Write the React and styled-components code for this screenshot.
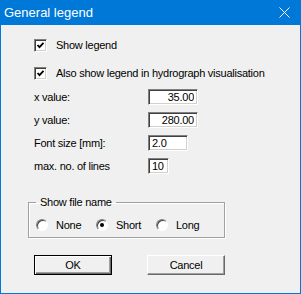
import React from 'react';
import styled, {createGlobalStyle} from 'styled-components';

const GlobalStyle = createGlobalStyle`
  html, body {
    margin: 0;
    padding: 0;
    background: #f0f0f0;
  }
  body {
    font-family: "Liberation Sans", Arial, sans-serif;
    font-size: 11px;
    letter-spacing: -0.25px;
    color: #000;
  }
`;

const CheckMark = () => (
    <svg width="9" height="9" viewBox="0 0 9 9">
        <polyline points="1.5,4 3.5,6.2 7.5,1.8" fill="none" stroke="#000" strokeWidth="1.8"/>
    </svg>
);

const CloseIcon = () => (
    <svg width="11" height="11" viewBox="0 0 11 11">
        <path d="M0.5 0.5 L10.5 10.5 M10.5 0.5 L0.5 10.5" stroke="#fff" strokeWidth="1"/>
    </svg>
);

const App = () => {
    const fields = [
        {label: 'x value:', value: '35.00', width: 50, align: 'right'},
        {label: 'y value:', value: '280.00', width: 50, align: 'right'},
        {label: 'Font size [mm]:', value: '2.0', width: 40, align: 'left'},
        {label: 'max. no. of lines', value: '10', width: 21, align: 'left'},
    ];

    const options = ['None', 'Short', 'Long'];

    return (
        <>
            <GlobalStyle/>
            <Window>
                <TitleBar>
                    <Title>General legend</Title>
                    <CloseButton><CloseIcon/></CloseButton>
                </TitleBar>
                <Body>
                    <Checks>
                        <CheckRow>
                            <CheckBox><CheckMark/></CheckBox>
                            Show legend
                        </CheckRow>
                        <CheckRow>
                            <CheckBox><CheckMark/></CheckBox>
                            Also show legend in hydrograph visualisation
                        </CheckRow>
                    </Checks>

                    <Fields>
                        {fields.map((field) => (
                            <React.Fragment key={field.label}>
                                <FieldLabel>{field.label}</FieldLabel>
                                <Field
                                    readOnly
                                    value={field.value}
                                    $width={field.width}
                                    $align={field.align}
                                />
                            </React.Fragment>
                        ))}
                    </Fields>

                    <Group>
                        <GroupTitle>Show file name</GroupTitle>
                        <Radios>
                            {options.map((option) => (
                                <RadioOption key={option}>
                                    <Radio $checked={option === 'Short'}/>
                                    {option}
                                </RadioOption>
                            ))}
                        </Radios>
                    </Group>

                    <Buttons>
                        <Button $default>OK</Button>
                        <Button>Cancel</Button>
                    </Buttons>
                </Body>
            </Window>
        </>
    );
};

export default App;


const Window = styled.div`
  width: 301px;
  height: 294px;
  box-sizing: border-box;
  border: 1px solid #0078d7;
  border-top: none;
  background: #f0f0f0;
  display: flex;
  flex-direction: column;
`;

const TitleBar = styled.div`
  height: 25px;
  background: #0078d7;
  color: #fff;
  display: flex;
  align-items: center;
  justify-content: space-between;
  padding: 0 10px 0 4px;
  margin: 0 -1px;
  box-sizing: border-box;
`;

const Title = styled.span`
  font-size: 13px;
  letter-spacing: 0;
  margin-top: -1px;
`;

const CloseButton = styled.span`
  display: flex;
  margin-right: 1px;
`;

const Body = styled.div`
  padding: 14px 0 0 33px;
  display: flex;
  flex-direction: column;
`;

const Checks = styled.div`
  display: flex;
  flex-direction: column;
  gap: 15px;
`;

const CheckRow = styled.label`
  display: flex;
  align-items: center;
  gap: 9px;
  height: 13px;
  line-height: 13px;
`;

const CheckBox = styled.span`
  width: 13px;
  height: 13px;
  box-sizing: border-box;
  background: #fff;
  border: 1px solid;
  border-color: #808080 #fff #fff #808080;
  box-shadow: inset 1px 1px 0 #404040, inset -1px -1px 0 #d4d0c8;
  display: flex;
  align-items: center;
  justify-content: center;
`;

const Fields = styled.div`
  display: grid;
  grid-template-columns: 114px auto;
  grid-auto-rows: 16px;
  row-gap: 7px;
  margin-top: 9px;
  align-items: center;
`;

const FieldLabel = styled.span`
  line-height: 13px;
`;

const Field = styled.input`
  width: ${({$width}) => $width}px;
  height: 16px;
  box-sizing: border-box;
  margin: 0;
  padding: 0 3px;
  font: 11px "Liberation Sans", Arial, sans-serif;
  letter-spacing: -0.25px;
  color: #000;
  text-align: ${({$align}) => $align};
  background: #fff;
  border: 1px solid;
  border-color: #808080 #fff #fff #808080;
  box-shadow: inset 1px 1px 0 #404040, inset -1px -1px 0 #d4d0c8;
  outline: none;
`;

const Group = styled.fieldset`
  width: 197px;
  box-sizing: border-box;
  margin: 22px 0 0 -6px;
  padding: 9px 0 6px 7px;
  border: 1px solid #a0a0a0;
  box-shadow: 1px 1px 0 #fff, inset 1px 1px 0 #fff;
`;

const GroupTitle = styled.legend`
  padding: 0 4px;
  line-height: 13px;
`;

const Radios = styled.div`
  display: grid;
  grid-template-columns: repeat(3, 60px);
`;

const RadioOption = styled.label`
  display: flex;
  align-items: center;
  gap: 8px;
  height: 13px;
`;

const Radio = styled.span`
  width: 12px;
  height: 12px;
  box-sizing: border-box;
  border-radius: 50%;
  background: #fff;
  border: 1px solid;
  border-color: #808080 #fff #fff #808080;
  box-shadow: inset 1px 1px 0 #404040;
  display: flex;
  align-items: center;
  justify-content: center;

  &::after {
    content: '';
    width: 4px;
    height: 4px;
    border-radius: 50%;
    background: ${({$checked}) => $checked ? '#000' : 'transparent'};
  }
`;

const Buttons = styled.div`
  display: flex;
  gap: 35px;
  margin-top: 17px;
`;

const Button = styled.button`
  width: 78px;
  height: 20px;
  box-sizing: border-box;
  margin: 0;
  padding: 0;
  font: 11px "Liberation Sans", Arial, sans-serif;
  letter-spacing: -0.25px;
  color: #000;
  background: #f0f0f0;
  border: 1px solid;
  border-color: ${({$default}) => $default ? '#000' : '#fff #696969 #696969 #fff'};
  box-shadow: ${({$default}) => $default
    ? 'inset 1px 1px 0 #fff, inset -1px -1px 0 #696969, inset -2px -2px 0 #a0a0a0'
    : 'inset -1px -1px 0 #a0a0a0'};
`;
